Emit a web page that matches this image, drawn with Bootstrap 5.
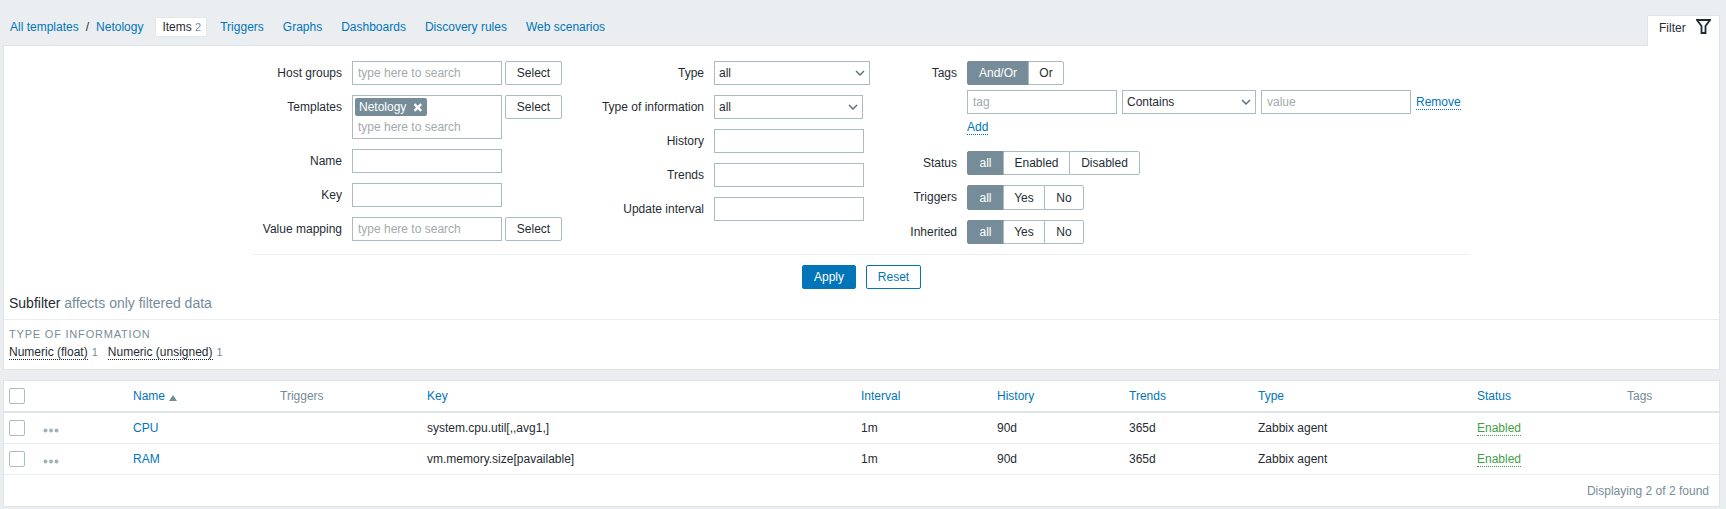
<!DOCTYPE html>
<html lang="en">
<head>
<meta charset="utf-8">
<title>Items</title>
<link href="https://cdn.jsdelivr.net/npm/bootstrap@5.3.0/dist/css/bootstrap.min.css" rel="stylesheet">
<style>
html,body{height:509px;overflow:hidden}
body{background:#ebeef0;color:#1f2c33;font:12px/16px "Liberation Sans",Arial,sans-serif}
.zpage{padding:0 6px 0 3px}
a{color:#0275b8;text-decoration:none}
.zband{height:45px}
.zcrumbs{margin:17px 0 0 7px;height:20px;line-height:20px;padding:0}
.zcrumbs .zsep{color:#1f2c33;margin:0 7px 0 7px}
.zcrumbs.ztabs{margin:17px 0 0 12px;padding:0;gap:5px}
.ztabs li{padding:0 7px}
.ztabs li.zon{background:#fff;border-radius:2px;margin-right:1px;padding:0 6px 0 7px;box-shadow:0 0 0 1px #e3e7e9 inset}
.ztabs .znum{font-size:11px;color:#768d99}
.zftab{margin-top:15px;height:31px;width:73px;background:#fff;border:1px solid #dfe4e7;border-bottom:0;border-radius:2px 2px 0 0;padding:4px 0 0 11px;position:relative;z-index:2;gap:10px}
.zfun{margin-top:-1px}
.zpanel{background:#fff;border:1px solid #dfe4e7}
.zform{margin-left:249px;width:1217px;padding-top:15px;height:208px}
.zcol1{width:347px}
.zcol2{width:281px}
.zrow{margin-bottom:10px;gap:10px}
.zl1{width:89px}.zl2{width:104px}.zl3{width:76px}
.zlab{text-align:right;line-height:24px;flex:none}
.form-control.zin,.form-select.zin{font-size:12px;line-height:16px;height:24px;min-height:24px;border:1px solid #acbbc2;border-radius:0;padding:3px 5px;color:#1f2c33;box-shadow:none}
.form-control.zin::placeholder{color:#a3a9ac}
.form-select.zin{padding:3px 16px 3px 4px;background-image:url("data:image/svg+xml,%3Csvg xmlns='http://www.w3.org/2000/svg' viewBox='0 0 10 6'%3E%3Cpath d='M1 1l4 4 4-4' fill='none' stroke='%23596a73' stroke-width='1.4'/%3E%3C/svg%3E");background-position:right 4px center;background-size:10px 6px}
.zw150{width:150px;flex:none}.zw156{width:156px;flex:none}.zw149{width:149px;flex:none}.zw135{width:134px;flex:none}
.zctl{gap:3px}
.btn.zbtn{font-size:12px;line-height:16px;height:24px;padding:3px 0;width:57px;border:1px solid #acbbc2;border-radius:2px;color:#1f2c33;background:#fff}
.zmulti{width:150px;height:44px;border:1px solid #acbbc2;padding:2px 2px 0;flex:none}
.zchip{height:18px;width:72px;background:#768d99;color:#fff;border-radius:2px;padding:1px 4px;line-height:16px;gap:7px}
.zph{padding:3px 3px 0;color:#a3a9ac;line-height:16px}
.btn-group .btn.zseg{font-size:12px;line-height:16px;height:24px;padding:3px 0;border:1px solid #acbbc2;color:#1f2c33;background:#fff;border-radius:2px;flex:none}
.btn-group .btn.zseg.zact{background:#768d99;border-color:#768d99;color:#fff}
.btn-group.ztall .btn.zseg{height:25px}
.zs62{width:62px}.zs36{width:36px}.zs37{width:37px}.zs67{width:67px}.zs71{width:71px}.zs42{width:42px}.zs40{width:40px}
.zrow3{gap:10px;margin-bottom:10px}
.ztagrow{gap:5px;margin:-5px 0 5px}
.ztagspace{width:76px;margin-right:5px;flex:none}
.zdot{border-bottom:1px dotted #0275b8;line-height:14px;display:inline-block}
.zadd{margin:0 0 16px 86px;height:16px}
.zhr{border-top:1px solid #ebeef0;margin:0 0 0 249px;width:1217px;height:36px;padding-top:10px;gap:10px}
.btn.zapply{font-size:12px;line-height:16px;height:24px;width:54px;padding:3px 0;background:#0275b8;border:1px solid #0275b8;color:#fff;border-radius:2px}
.btn.zreset{font-size:12px;line-height:16px;height:24px;width:55px;padding:3px 0;background:#fff;border:1px solid #0275b8;color:#0275b8;border-radius:2px}
.zsubhead{font-size:14px;line-height:16px;padding:5px 5px 8px;height:30px;border-bottom:1px solid #ebeef0}
.zmuted{color:#768d99}
.zsubbody{padding:7px 5px 0;height:49px}
.zsubtitle{font-size:11px;letter-spacing:.8px;color:#768d99;line-height:14px;text-transform:uppercase;margin-bottom:3px}
.zdark{color:#1f2c33;border-bottom:1px dotted #1f2c33;line-height:14px;display:inline-block}
.zcount{font-size:11px;color:#768d99;margin:0 10px 0 4px}
.zlist{margin-top:10px;height:127px}
table.ztable{table-layout:fixed;width:1715px;border-collapse:separate;border-spacing:0;margin:0;font-size:12px}
.ztable col:nth-child(1){width:34px}.ztable col:nth-child(2){width:90px}.ztable col:nth-child(3){width:147px}
.ztable col:nth-child(4){width:147px}.ztable col:nth-child(5){width:434px}.ztable col:nth-child(6){width:136px}
.ztable col:nth-child(7){width:132px}.ztable col:nth-child(8){width:129px}.ztable col:nth-child(9){width:219px}
.ztable col:nth-child(10){width:150px}.ztable col:nth-child(11){width:97px}
.ztable>thead>tr>th{height:32px;padding:0 5px;border-bottom:2px solid #dfe4e7;font-weight:400;color:#768d99;background:#fff;vertical-align:middle;box-shadow:none}
.ztable>tbody>tr>td{height:31px;padding:0 5px;border-bottom:1px solid #ebeef0;color:#1f2c33;background:#fff;vertical-align:middle;box-shadow:none}
.zbox{width:16px;height:16px;border:1px solid #acbbc2;border-radius:2px;display:block;background:#fff}
.zgreen{color:#429e47;border-bottom:1px dotted #429e47;line-height:14px;display:inline-block}
.zfoot{height:32px;line-height:32px;text-align:right;padding-right:10px;color:#768d99}
.zarrow{vertical-align:-1px;margin-left:4px}
</style>
</head>
<body>
<div class="zpage">
  <div class="zband d-flex justify-content-between">
    <div class="d-flex">
      <div class="zcrumbs d-flex"><a href="#">All templates</a><span class="zsep">/</span><a href="#">Netology</a></div>
      <ul class="ztabs zcrumbs list-unstyled d-flex">
        <li class="zon"><span>Items</span> <span class="znum">2</span></li>
        <li><a href="#">Triggers</a></li>
        <li><a href="#">Graphs</a></li>
        <li><a href="#">Dashboards</a></li>
        <li><a href="#">Discovery rules</a></li>
        <li><a href="#">Web scenarios</a></li>
      </ul>
    </div>
    <div class="zftab d-flex align-items-start">
      <span>Filter</span>
      <svg class="zfun" width="15" height="15" viewBox="0 0 15 15"><path d="M1 1h13L9.5 7v7h-4V7z" fill="none" stroke="#1f2c33" stroke-width="1.8"/></svg>
    </div>
  </div>

  <div class="zpanel">
    <div class="zform d-flex">
      <div class="zcol1">
        <div class="zrow d-flex"><div class="zlab zl1">Host groups</div><div class="d-flex zctl"><input class="form-control zin zw150" placeholder="type here to search"><button class="btn zbtn">Select</button></div></div>
        <div class="zrow d-flex"><div class="zlab zl1">Templates</div><div class="d-flex zctl align-items-start"><div class="zmulti"><div class="zchip d-flex align-items-center"><span>Netology</span><svg width="11" height="11" viewBox="0 0 10 10"><path d="M1.5 1.5l7 7M8.5 1.5l-7 7" stroke="#fff" stroke-width="2.4"/></svg></div><div class="zph">type here to search</div></div><button class="btn zbtn">Select</button></div></div>
        <div class="zrow d-flex"><div class="zlab zl1">Name</div><input class="form-control zin zw150"></div>
        <div class="zrow d-flex"><div class="zlab zl1">Key</div><input class="form-control zin zw150"></div>
        <div class="zrow d-flex"><div class="zlab zl1">Value mapping</div><div class="d-flex zctl"><input class="form-control zin zw150" placeholder="type here to search"><button class="btn zbtn">Select</button></div></div>
      </div>
      <div class="zcol2">
        <div class="zrow d-flex"><div class="zlab zl2">Type</div><select class="form-select zin zw156"><option>all</option></select></div>
        <div class="zrow d-flex"><div class="zlab zl2">Type of information</div><select class="form-select zin zw149"><option>all</option></select></div>
        <div class="zrow d-flex"><div class="zlab zl2">History</div><input class="form-control zin zw150"></div>
        <div class="zrow d-flex"><div class="zlab zl2">Trends</div><input class="form-control zin zw150"></div>
        <div class="zrow d-flex"><div class="zlab zl2">Update interval</div><input class="form-control zin zw150"></div>
      </div>
      <div class="flex-grow-1">
        <div class="zrow3 d-flex"><div class="zlab zl3">Tags</div><div class="btn-group"><button class="btn zseg zact zs62">And/Or</button><button class="btn zseg zs36">Or</button></div></div>
        <div class="ztagrow d-flex">
          <div class="ztagspace"></div>
          <input class="form-control zin zw150" placeholder="tag">
          <select class="form-select zin zw135"><option>Contains</option></select>
          <input class="form-control zin zw150" placeholder="value">
          <a href="#" class="zdot align-self-center">Remove</a>
        </div>
        <div class="zadd"><a href="#" class="zdot">Add</a></div>
        <div class="zrow3 d-flex"><div class="zlab zl3">Status</div><div class="btn-group"><button class="btn zseg zact zs37">all</button><button class="btn zseg zs67">Enabled</button><button class="btn zseg zs71">Disabled</button></div></div>
        <div class="zrow3 d-flex"><div class="zlab zl3">Triggers</div><div class="btn-group ztall"><button class="btn zseg zact zs37">all</button><button class="btn zseg zs42">Yes</button><button class="btn zseg zs40">No</button></div></div>
        <div class="zrow3 d-flex"><div class="zlab zl3">Inherited</div><div class="btn-group"><button class="btn zseg zact zs37">all</button><button class="btn zseg zs42">Yes</button><button class="btn zseg zs40">No</button></div></div>
      </div>
    </div>
    <div class="zhr d-flex justify-content-center"><button class="btn zapply">Apply</button><button class="btn zreset">Reset</button></div>
    <div class="zsubhead">Subfilter <span class="zmuted">affects only filtered data</span></div>
    <div class="zsubbody">
      <div class="zsubtitle">Type of information</div>
      <div class="d-flex align-items-baseline"><a href="#" class="zdark">Numeric (float)</a><span class="zcount">1</span><a href="#" class="zdark">Numeric (unsigned)</a><span class="zcount">1</span></div>
    </div>
  </div>

  <div class="zpanel zlist">
    <table class="table ztable">
      <colgroup><col><col><col><col><col><col><col><col><col><col><col></colgroup>
      <thead>
        <tr>
          <th><span class="zbox"></span></th><th></th>
          <th><a href="#">Name</a><svg class="zarrow" width="8" height="6" viewBox="0 0 8 6"><path d="M4 0l4 6H0z" fill="#768d99"/></svg></th>
          <th>Triggers</th><th><a href="#">Key</a></th><th><a href="#">Interval</a></th><th><a href="#">History</a></th><th><a href="#">Trends</a></th><th><a href="#">Type</a></th><th><a href="#">Status</a></th><th>Tags</th>
        </tr>
      </thead>
      <tbody>
        <tr>
          <td><span class="zbox"></span></td>
          <td><svg class="d-block mt-1" width="16" height="5" viewBox="0 0 16 5"><g fill="#a3b1b8"><circle cx="2.5" cy="2.5" r="2"/><circle cx="8" cy="2.5" r="2"/><circle cx="13.5" cy="2.5" r="2"/></g></svg></td>
          <td><a href="#">CPU</a></td><td></td><td>system.cpu.util[,,avg1,]</td><td>1m</td><td>90d</td><td>365d</td><td>Zabbix agent</td><td><a href="#" class="zgreen">Enabled</a></td><td></td>
        </tr>
        <tr>
          <td><span class="zbox"></span></td>
          <td><svg class="d-block mt-1" width="16" height="5" viewBox="0 0 16 5"><g fill="#a3b1b8"><circle cx="2.5" cy="2.5" r="2"/><circle cx="8" cy="2.5" r="2"/><circle cx="13.5" cy="2.5" r="2"/></g></svg></td>
          <td><a href="#">RAM</a></td><td></td><td>vm.memory.size[pavailable]</td><td>1m</td><td>90d</td><td>365d</td><td>Zabbix agent</td><td><a href="#" class="zgreen">Enabled</a></td><td></td>
        </tr>
      </tbody>
    </table>
    <div class="zfoot">Displaying 2 of 2 found</div>
  </div>
</div>
</body>
</html>
